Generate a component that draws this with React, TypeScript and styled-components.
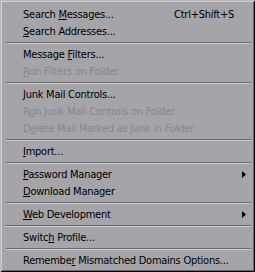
import React from "react";
import styled, { createGlobalStyle } from "styled-components";

const Global = createGlobalStyle`
  html, body { margin: 0; padding: 0; background: #ffffff; }
  body { font-family: "DejaVu Sans Condensed", "DejaVu Sans", sans-serif; }
`;

const Menu = styled.div`
  box-sizing: border-box;
  width: 255px;
  height: 272px;
  background: #a5a4a9;
  padding: 6px 3px 2px 3px;
  display: flex;
  flex-direction: column;
  box-shadow:
    inset 1px 1px 0 #b9b8bd,
    inset -1px -1px 0 #000000,
    inset 2px 2px 0 #cfced3,
    inset -2px -2px 0 #6a696e;
`;

const Item = styled.div<{ $disabled?: boolean }>`
  height: 17px;
  display: flex;
  align-items: center;
  padding: 0 6px 0 20px;
  font-family: "DejaVu Sans Condensed", "DejaVu Sans", sans-serif;
  font-stretch: condensed;
  font-size: 11px;
  letter-spacing: -0.25px;
  color: ${(p) => (p.$disabled ? "#88878c" : "#000000")};
  white-space: nowrap;
`;

const Label = styled.span`
  flex: 1;
  u { text-decoration: underline; text-underline-offset: 1px; }
`;

const Shortcut = styled.span`
  margin-left: 12px;
  margin-right: 12px;
`;

const Arrow = styled.svg`
  width: 4px;
  height: 7px;
  margin-right: 0;
`;

const Separator = styled.div`
  height: 6px;
  display: flex;
  align-items: center;
  padding: 0 1px 0 3px;
  &::before {
    content: "";
    flex: 1;
    height: 0;
    border-top: 1px solid #6a696e;
    border-bottom: 1px solid #cfced3;
  }
`;

type Entry =
  | { sep: true }
  | { text: string; key: number; disabled?: boolean; shortcut?: string; sub?: boolean };

const entries: Entry[] = [
  { text: "Search Messages...", key: 7, shortcut: "Ctrl+Shift+S" },
  { text: "Search Addresses...", key: 0 },
  { sep: true },
  { text: "Message Filters...", key: 8 },
  { text: "Run Filters on Folder", key: 0, disabled: true },
  { sep: true },
  { text: "Junk Mail Controls...", key: 0 },
  { text: "Run Junk Mail Controls on Folder", key: 1, disabled: true },
  { text: "Delete Mail Marked as Junk in Folder", key: 1, disabled: true },
  { sep: true },
  { text: "Import...", key: 0 },
  { sep: true },
  { text: "Password Manager", key: 0, sub: true },
  { text: "Download Manager", key: 0 },
  { sep: true },
  { text: "Web Development", key: 0, sub: true },
  { sep: true },
  { text: "Switch Profile...", key: 5 },
  { sep: true },
  { text: "Remember Mismatched Domains Options...", key: 7 },
];

function renderLabel(text: string, key: number) {
  return (
    <>
      {text.slice(0, key)}
      <u>{text[key]}</u>
      {text.slice(key + 1)}
    </>
  );
}

export default function App() {
  return (
    <>
      <Global />
      <Menu>
        {entries.map((e, i) =>
          "sep" in e ? (
            <Separator key={i} />
          ) : (
            <Item key={i} $disabled={e.disabled}>
              <Label>{renderLabel(e.text, e.key)}</Label>
              {e.shortcut && <Shortcut>{e.shortcut}</Shortcut>}
              {e.sub && (
                <Arrow viewBox="0 0 4 7">
                  <polygon points="0,0 4,3.5 0,7" fill="#000" />
                </Arrow>
              )}
            </Item>
          )
        )}
      </Menu>
    </>
  );
}
